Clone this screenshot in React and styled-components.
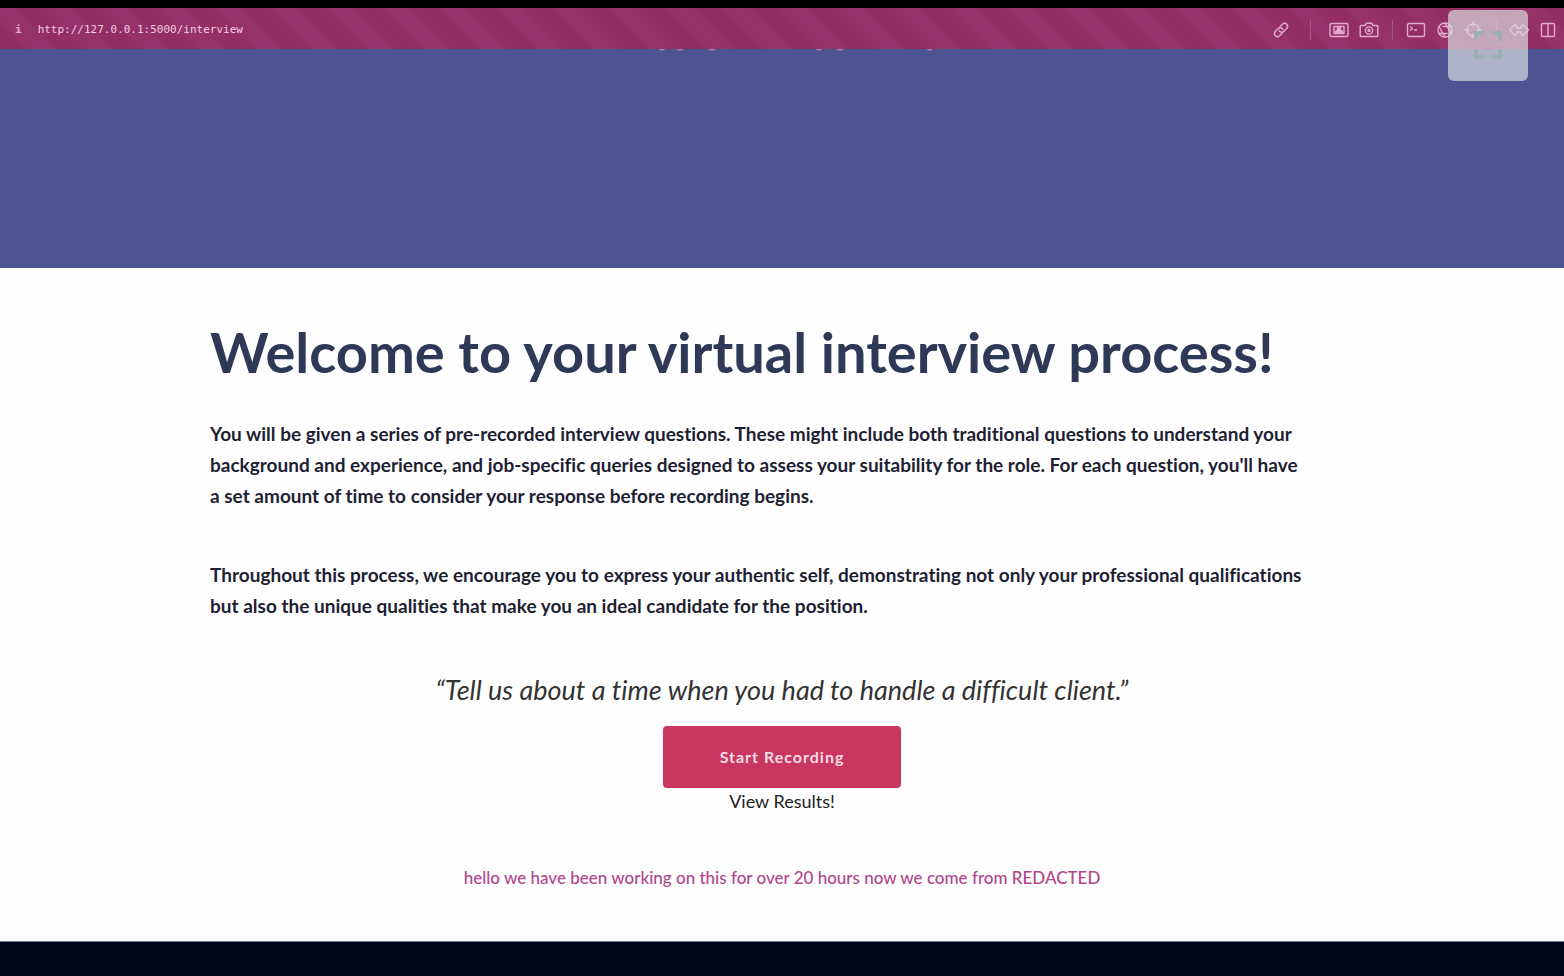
import React from 'react';
import styled, { createGlobalStyle } from 'styled-components';

const GlobalStyle = createGlobalStyle`
  * { box-sizing: border-box; }
  body {
    margin: 0;
    background: #010618;
    color: #1f1f33;
    font-family: Lato, "Open Sans", sans-serif;
    font-variant-ligatures: none;
  }
`;

const Page = styled.div`
  position: relative;
  display: flex;
  flex-direction: column;
  min-height: 100vh;
  border-top: 8px solid #000;
`;

const Toolbar = styled.header`
  display: flex;
  align-items: center;
  justify-content: space-between;
  height: 41px;
  padding: 2px 8px 0 15px;
  color: #e3abce;
  background: repeating-linear-gradient(45deg, #932e64 0 18px, #96326a 22px 38px, #932e64 40px);
`;

const Address = styled.div`
  display: flex;
  align-items: center;
  gap: 16px;
  font: 700 11px/16px "DejaVu Sans Mono", monospace;
`;

const UrlLink = styled.a`
  color: #f3cce3;
  font-weight: 400;
  text-decoration: none;
`;

const Tools = styled.div`
  display: flex;
  align-items: center;
  gap: 10px;
`;

const ToolButton = styled.button`
  display: flex;
  padding: 0;
  border: 0;
  background: none;
  color: inherit;
`;

const Divider = styled.span`
  width: 1px;
  height: 20px;
  margin: 0 ${(p) => p.$after}px 0 ${(p) => p.$before}px;
  background: #a9538a;
`;

const Glyph = styled.svg`
  display: block;
  fill: none;
  stroke: currentColor;
  stroke-width: 1.4;
  stroke-linecap: round;
  stroke-linejoin: round;
`;

const Hero = styled.section`
  height: 219px;
  background: #4e5491;
`;

const Descenders = styled.svg`
  display: block;
  margin: 0 auto;
  fill: #a27bb2;
`;

const Main = styled.main`
  display: flex;
  flex-direction: column;
  align-items: center;
  padding: 49px 24px;
  background: #fefefe;
  border-bottom: 1px solid #777a80;
`;

const Intro = styled.div`
  width: 100%;
  max-width: 1144px;
`;

const Title = styled.h1`
  margin: 0 0 31px;
  color: #2d3957;
  font-size: 56px;
  font-weight: 700;
  line-height: 70px;
`;

const Paragraph = styled.p`
  max-width: 1096px;
  margin: 0 0 48px;
  font-size: 19px;
  font-weight: 700;
  line-height: 31px;
`;

const Prompt = styled.blockquote`
  margin: 1px 0 16px;
  color: #333;
  font-size: 27px;
  font-style: italic;
  line-height: 40px;
`;

const RecordButton = styled.button`
  width: 238px;
  height: 62px;
  border: 0;
  border-radius: 4px;
  background: #c93760;
  color: #f8dbe5;
  font: 700 16px/24px Lato, sans-serif;
  letter-spacing: 1px;
`;

const ResultsLink = styled.a`
  color: #222;
  font-size: 18px;
  line-height: 26px;
  text-decoration: none;
`;

const Note = styled.p`
  margin: 50px 0 0;
  color: #b0468b;
  font-size: 17px;
  font-weight: 500;
  line-height: 28px;
`;

const FullscreenButton = styled.button`
  position: absolute;
  top: 2px;
  right: 36px;
  display: flex;
  align-items: center;
  justify-content: center;
  width: 80px;
  height: 71px;
  padding: 0 0 2px;
  border: 0;
  border-radius: 6px;
  background: rgba(217, 217, 221, 0.7);
  color: #9caeb2;
`;

const LinkIcon = () => (
  <Glyph width="18" height="18" viewBox="0 0 18 18">
    <g transform="rotate(-45 9 9)">
      <path d="M7.5 12H4a3 3 0 0 1 0-6h4a3 3 0 0 1 2.8 4M10.500 6H14a3 3 0 0 1 0 6h-4a3 3 0 0 1-2.800-4" />
    </g>
  </Glyph>
);

const CaptureIcon = () => (
  <Glyph width="20" height="16" viewBox="0 0 20 16">
    <rect x="1" y="1.500" width="18" height="13" rx="1.500" />
    <path d="M5 4.500v7h10v-7z" />
    <path d="M6.500 11c0-2 1.500-3 3.500-3s3.500 1 3.500 3z" fill="currentColor" />
    <circle cx="10" cy="6.500" r="1.500" fill="currentColor" />
  </Glyph>
);

const CameraIcon = () => (
  <Glyph width="20" height="16" viewBox="0 0 20 16">
    <path d="M2 3.500h4L7.500 1.200h5L14 3.500h4q.8 0 .8.800v9.400q0 .8-.8.800H2q-.8 0-.8-.800V4.300q0-.8.800-.800z" />
    <circle cx="10" cy="8.500" r="3.600" />
    <circle cx="10" cy="8.500" r="1" />
  </Glyph>
);

const TerminalIcon = () => (
  <Glyph width="20" height="16" viewBox="0 0 20 16">
    <rect x="1.500" y="1.500" width="17" height="13" rx="1.500" />
    <path d="M4.500 5l2 1.500-2 1.500M8.500 8h2" />
  </Glyph>
);

const ShutterIcon = () => (
  <Glyph width="18" height="18" viewBox="0 0 18 18">
    <circle cx="9" cy="9" r="7" />
    <path d="M9 2l4 7M15 5.500H7M15 12.500l-4-7M9 16L5 9M3 12.500h8M3 5.500l4 7" />
  </Glyph>
);

const TargetIcon = () => (
  <Glyph width="18" height="18" viewBox="0 0 18 18">
    <circle cx="9" cy="9" r="6" />
    <path d="M9 1v4M9 13v4M1 9h4M13 9h4" />
  </Glyph>
);

const ArrowsIcon = () => (
  <Glyph width="22" height="16" viewBox="0 0 22 16">
    <path d="M7 2.500L1.500 8 7 13.500l2-2V10h4v1.500l2 2L20.500 8 15 2.500l-2 2V6H9V4.500z" />
  </Glyph>
);

const SplitIcon = () => (
  <Glyph width="16" height="16" viewBox="0 0 16 16">
    <rect x="1.500" y="1.500" width="13" height="13" rx="1" />
    <path d="M8 1.500v13" />
  </Glyph>
);

const FullscreenIcon = () => (
  <svg width="28" height="28" viewBox="0 0 28 28" fill="none" stroke="currentColor" strokeWidth="4" strokeLinejoin="round">
    <path d="M2 10V2h8M18 2h8v8M26 18v8h-8M10 26H2v-8" />
  </svg>
);

export default function App() {
  return (
    <Page>
      <GlobalStyle />
      <Toolbar>
        <Address>
          <span>i</span>
          <UrlLink href="#interview">http://127.0.0.1:5000/interview</UrlLink>
        </Address>
        <Tools>
          <ToolButton aria-label="Copy link"><LinkIcon /></ToolButton>
          <Divider $before={10} $after={8} />
          <ToolButton aria-label="Capture"><CaptureIcon /></ToolButton>
          <ToolButton aria-label="Camera"><CameraIcon /></ToolButton>
          <Divider $before={3} $after={3} />
          <ToolButton aria-label="Console"><TerminalIcon /></ToolButton>
          <ToolButton aria-label="Shutter"><ShutterIcon /></ToolButton>
          <ToolButton aria-label="Inspect"><TargetIcon /></ToolButton>
          <Divider $before={4} $after={1} />
          <ToolButton aria-label="Resize"><ArrowsIcon /></ToolButton>
          <ToolButton aria-label="Split view"><SplitIcon /></ToolButton>
        </Tools>
      </Toolbar>
      <Hero>
        <Descenders width="300" height="2" viewBox="0 0 300 2">
          {[30, 48, 80, 187, 208, 298].map((x) => (
            <ellipse key={x} cx={x} cy="0" rx="3" ry="1.500" />
          ))}
        </Descenders>
      </Hero>
      <Main>
        <Intro>
          <Title>Welcome to your virtual interview process!</Title>
          <Paragraph>
            You will be given a series of pre-recorded interview questions. These might include both
            traditional questions to understand your background and experience, and job-specific
            queries designed to assess your suitability for the role. For each question, you'll have
            a set amount of time to consider your response before recording begins.
          </Paragraph>
          <Paragraph>
            Throughout this process, we encourage you to express your authentic self, demonstrating
            not only your professional qualifications but also the unique qualities that make you an
            ideal candidate for the position.
          </Paragraph>
        </Intro>
        <Prompt>“Tell us about a time when you had to handle a difficult client.”</Prompt>
        <RecordButton>Start Recording</RecordButton>
        <ResultsLink href="#results">View Results!</ResultsLink>
        <Note>hello we have been working on this for over 20 hours now we come from REDACTED</Note>
      </Main>
      <FullscreenButton aria-label="Full screen"><FullscreenIcon /></FullscreenButton>
    </Page>
  );
}
